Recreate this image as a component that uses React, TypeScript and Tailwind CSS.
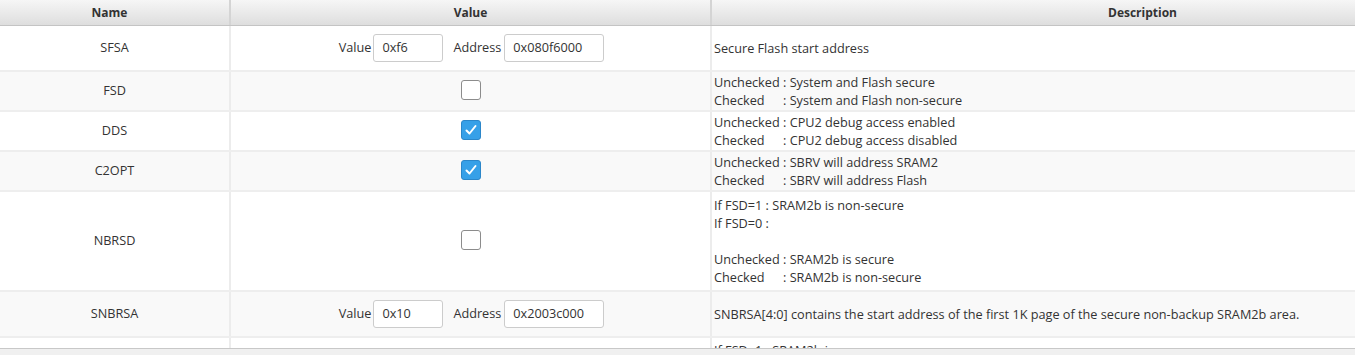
import React from 'react';

type Row = {
  name: string;
  height: string;
  kind: 'pair' | 'check';
  checked?: boolean;
  value?: string;
  address?: string;
  desc: React.ReactNode;
};

const Choice = ({ label, text }: { label: string; text: string }) => (
  <div>
    <span className="inline-block w-[69px]">{label}</span>: {text}
  </div>
);

const rows: Row[] = [
  {
    name: 'SFSA',
    height: 'h-[46px]',
    kind: 'pair',
    value: '0xf6',
    address: '0x080f6000',
    desc: <div>Secure Flash start address</div>,
  },
  {
    name: 'FSD',
    height: 'h-[40px]',
    kind: 'check',
    checked: false,
    desc: (
      <>
        <Choice label="Unchecked" text="System and Flash secure" />
        <Choice label="Checked" text="System and Flash non-secure" />
      </>
    ),
  },
  {
    name: 'DDS',
    height: 'h-[40px]',
    kind: 'check',
    checked: true,
    desc: (
      <>
        <Choice label="Unchecked" text="CPU2 debug access enabled" />
        <Choice label="Checked" text="CPU2 debug access disabled" />
      </>
    ),
  },
  {
    name: 'C2OPT',
    height: 'h-[40px]',
    kind: 'check',
    checked: true,
    desc: (
      <>
        <Choice label="Unchecked" text="SBRV will address SRAM2" />
        <Choice label="Checked" text="SBRV will address Flash" />
      </>
    ),
  },
  {
    name: 'NBRSD',
    height: 'h-[100px]',
    kind: 'check',
    checked: false,
    desc: (
      <>
        <div>If FSD=1 : SRAM2b is non-secure</div>
        <div>If FSD=0 :</div>
        <div>&nbsp;</div>
        <Choice label="Unchecked" text="SRAM2b is secure" />
        <Choice label="Checked" text="SRAM2b is non-secure" />
      </>
    ),
  },
  {
    name: 'SNBRSA',
    height: 'h-[46px]',
    kind: 'pair',
    value: '0x10',
    address: '0x2003c000',
    desc: <div>SNBRSA[4:0] contains the start address of the first 1K page of the secure non-backup SRAM2b area.</div>,
  },
];

const Checkbox = ({ checked }: { checked: boolean }) =>
  checked ? (
    <div className="w-[20px] h-[20px] rounded-[3px] border border-[#2b86c9] bg-[#36a0e8] flex items-center justify-center">
      <svg width="14" height="14" viewBox="0 0 14 14" fill="none">
        <path d="M2.5 7.5 L5.5 10.5 L11.5 3" stroke="white" strokeWidth="2" strokeLinecap="round" strokeLinejoin="round" />
      </svg>
    </div>
  ) : (
    <div className="w-[20px] h-[20px] rounded-[3px] border border-[#8c8c8c] bg-white" />
  );

const Field = ({ value, width }: { value: string; width: string }) => (
  <div className={`${width} h-[28px] border border-[#cccccc] rounded-[3px] bg-white pl-[8px] flex items-center`}>
    {value}
  </div>
);

export default function App() {
  return (
    <div
      className="w-[1355px] h-[355px] overflow-hidden bg-white text-[12.7px] text-[#333333]"
      style={{ fontFamily: '"Open Sans", sans-serif' }}
    >
      <div className="h-[348px] overflow-hidden">
        <div className="w-[1573px]">
          {/* header */}
          <div className="grid grid-cols-[231px_481px_861px] h-[26px] border-b border-[#c4c4c4] bg-gradient-to-b from-[#f6f6f6] to-[#dedede] font-bold text-[12px]">
            <div className="flex items-center justify-center pr-[10px] border-r-2 border-[#d4d4d4]">Name</div>
            <div className="flex items-center justify-center border-r-2 border-[#d4d4d4]">Value</div>
            <div className="flex items-center justify-center">Description</div>
          </div>

          {rows.map((r, i) => (
            <div
              key={r.name}
              className={`grid grid-cols-[231px_481px_861px] ${r.height} border-b-2 border-[#eeeeee] ${
                i % 2 === 1 ? 'bg-[#f9f9f9]' : 'bg-white'
              }`}
            >
              <div className="flex items-center justify-center border-r-2 border-[#ececec]">{r.name}</div>
              <div className="flex items-center justify-center border-r-2 border-[#ececec]">
                {r.kind === 'check' ? (
                  <div className="-mt-[2px]">
                    <Checkbox checked={!!r.checked} />
                  </div>
                ) : (
                  <div className="flex items-center pl-[2px]">
                    <span className="mr-[2px]">Value</span>
                    <Field value={r.value!} width="w-[70px]" />
                    <span className="ml-[10px] mr-[3px]">Address</span>
                    <Field value={r.address!} width="w-[100px]" />
                  </div>
                )}
              </div>
              <div className="flex flex-col justify-center pl-[2px] leading-[18px]">{r.desc}</div>
            </div>
          ))}

          {/* partially visible row */}
          <div className="grid grid-cols-[231px_481px_861px] h-[40px] bg-white">
            <div className="border-r-2 border-[#ececec]" />
            <div className="border-r-2 border-[#ececec]" />
            <div className="pl-[2px] pt-[3px] leading-[18px]">If FSD=1 : SRAM2b is non-secure</div>
          </div>
        </div>
      </div>
      <div className="h-[7px] border-t border-[#c8c8c8] bg-[#f0f0f0]" />
    </div>
  );
}
